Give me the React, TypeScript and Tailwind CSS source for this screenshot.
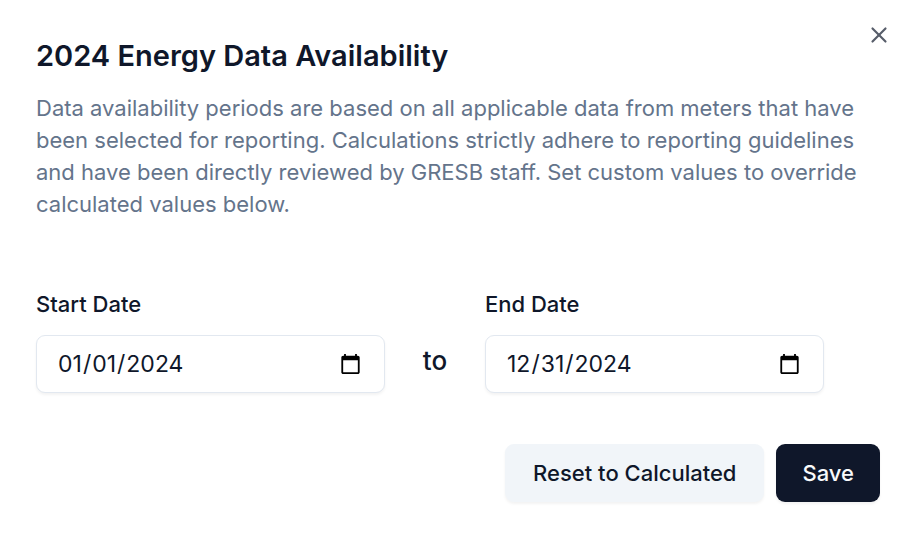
import { useState } from 'react';
import { X } from 'lucide-react';

interface DateFieldProps {
  id: string;
  label: string;
  value: string;
  className?: string;
  onChange: (value: string) => void;
}

const DateField = ({ id, label, value, className = '', onChange }: DateFieldProps) => (
  <div className={`flex flex-col gap-[15px] ${className}`}>
    <label htmlFor={id} className="text-[22px] leading-8 font-medium">
      {label}
    </label>
    <input
      id={id}
      type="date"
      value={value}
      onChange={(e) => onChange(e.target.value)}
      className="h-[58px] w-full rounded-[9px] border border-[#e2e8f0] bg-white px-5 text-[23px] shadow-[0_2px_3px_rgba(0,0,0,0.05)] outline-none"
    />
  </div>
);

export default function App() {
  const [start, setStart] = useState('2024-01-01');
  const [end, setEnd] = useState('2024-12-31');

  const reset = () => {
    setStart('2024-01-01');
    setEnd('2024-12-31');
  };

  return (
    <div
      role="dialog"
      aria-labelledby="title"
      className="relative min-h-screen bg-white px-9 pt-9 pb-14 font-[Inter,sans-serif] text-[#0f172a]"
    >
      <button type="button" aria-label="Close" className="absolute top-[22px] right-6 text-[#575d6a]">
        <X size={26} strokeWidth={2} />
      </button>

      <h2 id="title" className="text-[29px] leading-10 font-semibold">
        2024 Energy Data Availability
      </h2>
      <p className="mt-4 text-[22px] leading-8 text-[#64748b]">
        Data availability periods are based on all applicable data from meters that have been selected
        for reporting. Calculations strictly adhere to reporting guidelines and have been directly
        reviewed by GRESB staff. Set custom values to override calculated values below.
      </p>

      <div className="mt-[68px] flex items-end pr-14">
        <DateField id="start" label="Start Date" value={start} onChange={setStart} className="grow basis-[349px]" />
        <span className="w-[100px] pb-4 text-center text-[26px] leading-8 font-medium">to</span>
        <DateField id="end" label="End Date" value={end} onChange={setEnd} className="grow basis-[339px]" />
      </div>

      <div className="mt-[51px] flex justify-end gap-3">
        <button
          type="button"
          onClick={reset}
          className="h-[58px] rounded-[9px] bg-[#f1f5f9] px-7 text-[22px] font-medium shadow-[0_2px_3px_rgba(0,0,0,0.05)]"
        >
          Reset to Calculated
        </button>
        <button
          type="button"
          className="h-[58px] rounded-[9px] bg-[#0f172a] px-[26px] text-[22px] font-medium text-[#f8fafc] shadow-[0_2px_3px_rgba(0,0,0,0.05)]"
        >
          Save
        </button>
      </div>
    </div>
  );
}
